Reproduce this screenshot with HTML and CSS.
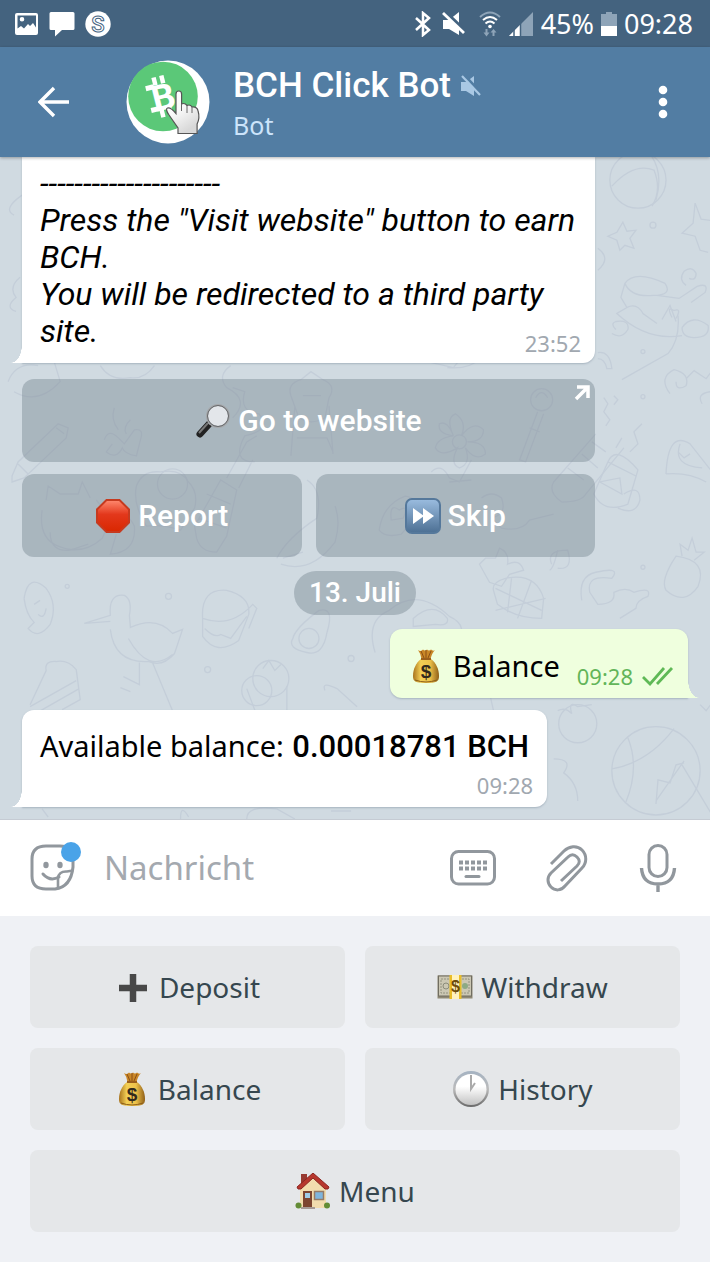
FILE: index.html
```html
<!DOCTYPE html>
<html lang="de">
<head>
<meta charset="utf-8">
<meta name="viewport" content="width=device-width, initial-scale=1">
<title>BCH Click Bot</title>
<link rel="stylesheet" href="styles.css">
</head>
<body>
<svg class="defs" width="0" height="0" aria-hidden="true">
  <defs>
    <linearGradient id="gold" x1="0" x2="1" y1="0" y2="0"><stop offset="0" stop-color="#a8731c"/><stop offset=".3" stop-color="#f3cf55"/><stop offset=".65" stop-color="#eec24a"/><stop offset="1" stop-color="#8f5f18"/></linearGradient>
    <symbol id="bag" viewBox="0 0 28 36">
      <path d="M6 2q3 2 5-.5 2 2 4 0 2 2 4 0 2 2 4 .5-3 3-4.500 9h-9Q9 6 6 2z" fill="#c98727"/>
      <path d="M9 3l3 7M14 2v8M19 3l-3 7" stroke="#8b4e16" stroke-width="1" fill="none"/>
      <path d="M9 11C4 15 1 21 1 28c0 6 3 7 13 7s13-1 13-7c0-7-3-13-8-17z" fill="url(#gold)"/>
      <path d="M3 32q11 4 22 0" stroke="#8b5c18" fill="none"/>
      <path d="M9 11h10" stroke="#9b5f1b" stroke-width="2"/>
      <text x="14" y="30" text-anchor="middle" class="bag-sign">$</text>
    </symbol>
  </defs>
</svg>

<div class="statusbar">
  <div class="status-group">
    <svg width="24" height="24" viewBox="0 0 24 24"><path fill="#fff" fill-rule="evenodd" d="M2 1h19q2 0 2 2v18q0 2-2 2H2q-2 0-2-2V3q0-2 2-2zm.5 2.500v13L6 14l3 2.500L13 12l2 2L18 11l3 4.500v-12zM7 5a2.300 2.300 0 1 1 0 4.600A2.300 2.300 0 0 1 7 5z"/></svg>
    <svg width="26" height="26" viewBox="0 0 26 26"><path fill="#fff" d="M2 1h22q1.500 0 1.500 1.500v15Q25.500 19 24 19H13l-7 6.500V19H2Q.5 19 .5 17.500v-15Q.5 1 2 1z"/></svg>
    <svg width="26" height="26" viewBox="0 0 26 26"><circle cx="13" cy="13" r="12.700" fill="#fff"/><text x="13" y="20.500" text-anchor="middle" class="badge-letter">S</text></svg>
  </div>
  <div class="status-group status-right">
    <svg width="16" height="26" viewBox="0 0 16 26"><path d="M1 7l13 12-6 5V2l6 5L1 19" fill="none" stroke="#fff" stroke-width="2.500"/></svg>
    <svg class="gap-mute" width="24" height="24" viewBox="0 0 24 24"><path fill="#fff" d="M1 8h6l10-8v23L7 17H1z"/><path d="M3 0l21 20" stroke="#44637f" stroke-width="4"/><path d="M1 1l21 20" stroke="#fff" stroke-width="2.800"/></svg>
    <svg class="gap-wifi" width="22" height="26" viewBox="0 0 22 26" fill="none" stroke-width="2"><path d="M1 6q10-9 20 0" stroke="#8ea4b8"/><path d="M4 9q7-6 14 0M6.500 12.500q4.500-4 9 0" stroke="#fff"/><circle cx="11" cy="15.500" r="1.800" fill="#fff"/><path d="M7.500 18v5M14.500 25v-5" stroke="#8ea4b8"/><path d="M4.500 21.500h6l-3 4zM11.500 21.500h6l-3-3.500z" fill="#8ea4b8"/></svg>
    <svg width="26" height="26" viewBox="0 0 26 26"><path d="M25 1v24H1z" fill="#8ea4b8"/><path d="M12 14v11H1z" fill="#fff"/><path d="M6 18v8M12.500 12v14" stroke="#44637f" stroke-width="1.500"/></svg>
    <span>45%</span>
    <svg width="16" height="24" viewBox="0 0 16 24"><path d="M5 0h6v2h5v12H0V2h5z" fill="#8ea4b8"/><path d="M0 14h16v10H0z" fill="#fff"/></svg>
    <span>09:28</span>
  </div>
</div>

<header class="header">
  <button class="icon-btn back" aria-label="Zurück"><svg width="32" height="32" viewBox="0 0 32 32"><path d="M31 16H3M16 2L2 16l14 14" fill="none" stroke="#fff" stroke-width="3.400"/></svg></button>
  <svg class="avatar" width="84" height="84" viewBox="0 0 84 84">
    <defs><linearGradient id="hand" x1="0" y1="0" x2=".5" y2="1"><stop offset="0" stop-color="#fff"/><stop offset=".5" stop-color="#fafafa"/><stop offset="1" stop-color="#d8d8d8"/></linearGradient></defs>
    <circle cx="42" cy="42" r="41.500" fill="#fff"/><circle cx="37" cy="36.500" r="34.800" fill="#5bc878"/>
    <g transform="rotate(-14 36 36)" fill="#fff"><text x="37" y="50" text-anchor="middle" class="coin-letter">B</text><path d="M30 16h4.500v8H30zM38 16h4.500v8H38zM30 49h4.500v8H30zM38 49h4.500v8H38zM22 22.500h8v5h-8zM22 45h8v5h-8z"/></g>
    <path d="M52 73.500V68L43 55q-4-6-1.500-7 3-1 8.500 5.500V34q0-3 2.800-3t2.800 3v10q3-1.500 5.500 1.500 3-1.500 5 1.500 5-.5 6 4 2 7-1 13v9.500z" fill="url(#hand)" stroke="#555" stroke-width="1.200"/>
    <path d="M55.500 44v7M61 45.500V53M66 47v6" stroke="#666" fill="none"/>
  </svg>
  <div class="peer">
    <h1 class="peer-name">BCH Click Bot <svg width="20" height="22" viewBox="0 0 20 22"><path d="M0 7h5l8-6v20l-8-5H0z" fill="#a9c8e4"/><path d="M3 0l18 19" stroke="#527da3" stroke-width="3"/><path d="M1 1l18 19" stroke="#a9c8e4" stroke-width="2.200"/></svg></h1>
    <p class="peer-state">Bot</p>
  </div>
  <button class="icon-btn more" aria-label="Mehr"><svg width="10" height="34" viewBox="0 0 10 34" fill="#fff"><circle cx="5" cy="5" r="4.300"/><circle cx="5" cy="17" r="4.300"/><circle cx="5" cy="29" r="4.300"/></svg></button>
</header>

<main class="chat">
  <svg class="wallpaper" viewBox="0 0 710 660" preserveAspectRatio="xMinYMin slice" aria-hidden="true">
    <g fill="none" stroke="#c4ced9" stroke-width="1.300">
      <circle cx="636" cy="23" r="28"/><path d="M610 29q22-24 42-16 8 20-2 36M648-3q14 18 6 46"/>
      <path d="M621 65l4 9 9-1-6 8 4 10-9-3-5 5-3-10-9-4 9-4zM693 46l6 16 14 2M693 46l-2 20-11 10 13 3 5 14 8 2"/>
      <circle cx="651" cy="68" r="3"/><circle cx="641" cy="194" r="2"/><path d="M596 91q14 10 0 22"/>
      <path d="M623 126q10-14 40 0 8 12-12 12-22 2-28-12zM623 126l-4 14 6 10-10 6q30 28 65 22M655 138l22 3 18-12q12-4 8 6l-14 10M625 150q10-5 16 6l14 10M660 162l8-14 6 16M670 160q-6-12 2-7 8-3 2 8M680 170q10-14 26-2 2 12-14 12-12 0-12-10M684 128q-8-6-2-14 8-6 12 2 0 8-7 5"/>
      <path d="M22 38q-20 14-8 20M20 120q-12 10-4 20-12 10 0 14M8 224q8-20 30-16M14 234q24 14 46-10l-6-20M100 208q10 16 30 12 14 2 24-12M230 208q-14 10-4 22 24 12 6 30M596 195q12-2 14 16h-5q-2-10-9-10"/>
      <path d="M12 318l6-14 40-38 10 4-2 10-42 40-12 4zM18 306l10 10M56 270l8 6M104 282q4-12 14-2l6 6 10-14q10-2 6 10l-4 16q-12-2-14-8-6 12-16 4 6-8 6-8M114 250q-4 12 4 22M130 262q-8 8-4 14"/>
      <path d="M136 328q6-16 24-14 20-4 28 10 10 10 6 26l-14 22q-18-6-34-4-14-22-10-40z"/><circle cx="172" cy="326" r="15"/><path d="M42 352q-4 28 16 36 24 10 44-8 10-20-6-38M46 342l2-14 12 8h18l4-12 8 16M50 374q0 20 20 18l18-6M100 352q24-4 34 16 2 26-24 28l6-20"/>
      <path d="M194 368l26-46 16 10-10 46-10 16q-16 0-20-14zM206 336l24 10M198 360l28 10M226 320l20-36 10-6M238 330l14-28M232 230l12 4q-6 20 14 22 14 16-14 22-14 26 10 26"/>
      <path d="M290 238q-4-12 10-16l10-8 12 8q14 6 6 18l-4 20q-14 8-26 0zM294 248l-4 50M328 248l4 48M296 280h30l6 14M302 238h18"/>
      <path d="M414 168l-6 32 44 10 20-24q10-10 4-36M418 170l14 16 24-12-38-4M446 210q44 4 42-44M428 195h40"/>
      <circle cx="540" cy="242" r="11"/><path d="M534 240q6-10 12 0M536 254l-18 48 6 2 18-48M528 270l10 4"/>
      <circle cx="458" cy="284" r="7"/><path d="M452 278q-8-18 2-22 12 8 6 22 12-16 22-6 0 12-16 12 18 0 18 12-10 8-20-6 6 16-6 20-10-4-2-20-16 10-22 0 2-10 18-12-16-2-14-12 8-4 14 12"/>
      <path d="M560 344q-14-10-8-20l42-48M560 344q20 0 24-8l38-46M566 310l16 12M580 296l16 14M590 284l14 10M430 314q10-10 18 6l10 4 12-22M448 324l22-2M480 340q10-8 20 0 6 16-10 20l10 10q20 4 28-8l24-6"/>
      <path d="M606 304q8-18 30 8l-10 34q-24 10-34-10zM606 304l28 14M598 324l22 12-2-16-20 4M622 336q16-10 16 6-4 16-22 8M614 290l6-10M628 294l8-8-4-12 8-8"/>
      <path d="M614 172q-6-6 0-8 14-2 12 8-6 10-16 4M620 222l46-26q12-14 10-38M668 236q-12-16 4-24 16 4 12 16-10 6-10-4M684 221l8-8 12 8 6-8M700 246q-6-10 8-12M602 240l4 6-4 8 6 8-4 6M612 238l4 4-4 5"/>
      <path d="M664 316q2-44 24-30l22 28M664 316q22-2 40 8M676 294l6 6 6-4M678 286q-8 22 22 24"/>
      <path d="M674 398q-16 24-10 34 18 16 32-4 10-26-22-30zM680 398l-2-12 8 6 4-12 4 14 8 0-10 8"/><circle cx="641" cy="239" r="2"/><circle cx="641" cy="409" r="2"/>
      <path d="M556 392q-4 18-8 20M556 410q16 2 10-18-22 0-16 14"/>
      <path d="M378 372q4-26 26-34 16 2 10 22l-14 16q-16 4-22-4zM390 362q-2-18 8-10 10-6 4 8z"/>
      <path d="M484 400l-6 6 10 18 12 4 8-12 14-4q-4-12-16-6 2-12-8-16l-4 10zM504 420q-14 4-12 12l4 14q18 14 44 14l2-20q-8-26-38-20zM494 430l46 22M510 420l-4 34M530 422l-14 38M544 440l-50 12"/>
      <path d="M580 442q-4-24 14-28 26-6 16 6-26-4-22 14l8 12q18 0 16-12 12-6 20 0 18-6 14 4-12 4-12 12l-16 10"/>
      <path d="M24 440q4-26 22-10 12 16 4 36-12 16-22 4l6-6q-8-8-10-24M34 446l6-4M38 456q6 6 8-6"/>
      <path d="M84 465l26-8q-2-22 14-20 8 4 5 20l1 12q26-12 42 6l10-4-8 24q-12 14-26 8-34 2-38-32M128 480q20 36 44 16M84 465l26-2M139 504v22l-16-8M152 504l20 48M120 529l10 4"/>
      <path d="M202 460q-2-30 24-28 24 6 22 24l-10 26q-22 16-36-4zM202 460q28 10 50-14l4 4-8 20M204 470q10 10 16 6l10 4 16-22"/><circle cx="207" cy="511" r="3"/><circle cx="350" cy="500" r="3"/><circle cx="168" cy="438" r="3"/><circle cx="67" cy="428" r="2"/>
      <path d="M292 480q2-10 26-28 16-4 8 22-4 24-20 20-20-4-14-14z"/><circle cx="308" cy="480" r="10"/>
      <path d="M30 546l16-34q-2-10 10-9 12-2 20 8l4 30-18 10M30 548l46-26M30 558l49-28"/>
      <circle cx="270" cy="520" r="18"/><circle cx="256" cy="532" r="15"/><path d="M262 510l6-8 6 10 6-6M286 528v34M246 530l12 32M324 532q-4-10 12-2l20 18"/>
      <path d="M374 494q-10-32 14-42 28-24 60 6 22 10 4 28M412 460q20-18 34 0 2 8-12 6l-22 2zM282 400l20-6M276 400q10-20 40-40 6-28-10-38M280 406q30 10 54-22 6-20 0-36"/>
      <circle cx="576" cy="565" r="19"/><path d="M556 552q8-4 14 3-4-14 6-7l14-2"/>
      <circle cx="654" cy="612" r="44"/><path d="M626 579q12 30-2 64M610 610q36-6 62-40M654 645l2-24 12 3 6-18 8-2M682 602l-28 40M680 606l30 50M698 546l6 6 6-8M552 600q20 0 10 14 14 10 14 28M442 532l16 4 16-8 14 6 4 18"/>
      <path d="M246 660q0-14 30-10l18 10M330 652h20M180 660q0-16 8-2M42 650l6 8"/>
    </g>
  </svg>

  <section class="thread">
    <article class="bubble in wide">
      <p class="notice">---------------------<br>Press the "Visit website" button to earn BCH.<br>You will be redirected to a third party site.</p>
      <time class="stamp">23:52</time>
    </article>
    <div class="inline-keys">
      <button class="inline-key full"><svg width="36" height="36" viewBox="0 0 36 36"><path d="M15 20L5 31" stroke="#222" stroke-width="7" stroke-linecap="round"/><path d="M13 20L4 30" stroke="#777" stroke-width="2"/><path d="M17 18l-3 3" stroke="#bbb" stroke-width="3"/><circle cx="23" cy="13" r="11" fill="#e3e6ea" stroke="#a5a7aa" stroke-width="2"/><circle cx="23" cy="13" r="10.500" fill="none" stroke="#55585b" stroke-width=".8"/></svg>Go to website
        <svg class="corner" width="16" height="16" viewBox="0 0 16 16"><path d="M3 2h11v11M14 2L2 14" fill="none" stroke="#fff" stroke-width="3.500"/></svg></button>
      <button class="inline-key"><svg width="36" height="36" viewBox="0 0 36 36"><defs><linearGradient id="red" x2="0" y2="1"><stop offset="0" stop-color="#ff8a70"/><stop offset=".45" stop-color="#e3381c"/><stop offset="1" stop-color="#d92700"/></linearGradient></defs><path d="M11.500 2h13L34 11.500v13L24.500 34h-13L2 24.500v-13z" fill="url(#red)" stroke="#c63a1f" stroke-width="2"/></svg>Report</button>
      <button class="inline-key"><svg width="36" height="36" viewBox="0 0 36 36"><defs><linearGradient id="blue" x2="0" y2="1"><stop offset="0" stop-color="#9bbde0"/><stop offset="1" stop-color="#4c6f93"/></linearGradient></defs><rect x="1" y="1" width="34" height="34" rx="6" fill="url(#blue)" stroke="#55789b" stroke-width="2"/><path d="M8 10l11 8-11 8zM18 10l11 8-11 8z" fill="#fff"/></svg>Skip</button>
    </div>
    <div class="date">13. Juli</div>
    <article class="bubble out">
      <svg class="bag-out" width="28" height="36"><use href="#bag"/></svg><span>Balance</span>
      <time class="stamp">09:28</time>
      <svg class="ticks" width="32" height="20" viewBox="0 0 32 20"><path d="M1 11l7 7L22 2M15 18L30 2" fill="none" stroke="#5fb956" stroke-width="2.800"/></svg>
    </article>
    <article class="bubble in balance">
      <p>Available balance: <b>0.00018781 BCH</b></p>
      <time class="stamp">09:28</time>
    </article>
  </section>
</main>

<form class="composer">
  <button type="button" class="icon-btn" aria-label="Sticker"><svg width="52" height="54" viewBox="0 0 52 54"><path d="M17 5h14q13 0 13 13v8Q42 46 26 48h-9Q3 48 3 35V18Q3 5 17 5z" fill="none" stroke="#91979d" stroke-width="3"/><path d="M29 47V37q1-7 9-6.500l6-1" fill="none" stroke="#91979d" stroke-width="2.600"/><path d="M14 33q7 8 16 3" fill="none" stroke="#91979d" stroke-width="3" stroke-linecap="round"/><ellipse cx="17" cy="24" rx="2.700" ry="3.200" fill="#91979d"/><ellipse cx="31" cy="24" rx="2.700" ry="3.200" fill="#91979d"/><circle cx="42" cy="11" r="10" fill="#4aa3e8"/></svg></button>
  <input class="message" type="text" placeholder="Nachricht" aria-label="Nachricht">
  <button type="button" class="icon-btn" aria-label="Tastatur"><svg width="48" height="50" viewBox="0 0 48 50"><rect x="2.500" y="8.500" width="43" height="32.500" rx="7" fill="none" stroke="#91979d" stroke-width="3"/><path d="M10 19.500h29M10 25.500h29" stroke="#91979d" stroke-width="4" stroke-dasharray="4 2"/><path d="M17 33.500h13" stroke="#91979d" stroke-width="3" stroke-linecap="round"/></svg></button>
  <button type="button" class="icon-btn" aria-label="Anhang"><svg width="44" height="50" viewBox="0 0 44 50"><path d="M5 21L18 8c5-5 13-6 18-1s5 13 0 18L19 43c-4 5-10 5-14 1s-4-10 0-14L22 14c3-3 6-3 9 0s3 6 0 9L15 38" fill="none" stroke="#91979d" stroke-width="3"/></svg></button>
  <button type="button" class="icon-btn" aria-label="Sprachnachricht"><svg width="38" height="50" viewBox="0 0 38 50"><rect x="10" y="2.500" width="18" height="31" rx="9" fill="none" stroke="#91979d" stroke-width="3"/><path d="M2.500 25q1 16 16.500 16t16.500-16M19 41v8" fill="none" stroke="#91979d" stroke-width="3.400"/></svg></button>
</form>

<nav class="keyboard" aria-label="Bot-Tastatur">
  <button class="key"><svg width="36" height="36" viewBox="0 0 36 36"><path d="M18 5v28M4 19h28" stroke="#484848" stroke-width="6.500"/></svg>Deposit</button>
  <button class="key"><svg width="36" height="36" viewBox="0 0 36 36"><rect x=".5" y="6.500" width="35" height="23" fill="#8f8975"/><rect x="1.500" y="7" width="33" height="20" fill="#cbc7b3" stroke="#706d60"/><rect x="4" y="10" width="28" height="14" fill="none" stroke="#949380" stroke-dasharray="2 1"/><circle cx="9" cy="17" r="3" fill="none" stroke="#8b8c7a"/><circle cx="28" cy="17" r="3" fill="#8daa84"/><path d="M12.500 6h12v24h-12z" fill="#e9bd28"/><path d="M15 6h7v24h-7z" fill="#fff2be"/><text x="18.500" y="23" text-anchor="middle" class="note-sign">$</text></svg>Withdraw</button>
  <button class="key"><svg width="36" height="36" viewBox="-4 0 36 36"><use href="#bag" width="28" height="36"/></svg>Balance</button>
  <button class="key"><svg width="38" height="38" viewBox="0 0 38 38"><defs><linearGradient id="rim" x2="0" y2="1"><stop offset="0" stop-color="#a5b3c2"/><stop offset=".5" stop-color="#bbb"/><stop offset="1" stop-color="#696969"/></linearGradient><linearGradient id="face" x2="0" y2="1"><stop offset=".4" stop-color="#fff"/><stop offset="1" stop-color="#c2c2c2"/></linearGradient></defs><circle cx="19" cy="19" r="18" fill="url(#rim)"/><circle cx="19" cy="19.500" r="15.500" fill="url(#face)"/><path d="M19 5v14l4-6" stroke="#aaa" stroke-width="2" fill="none"/></svg>History</button>
  <button class="key full"><svg width="36" height="36" viewBox="0 0 36 36"><path d="M6 1h6v12H6z" fill="#973a32"/><path d="M5 14L18 4l13 11v20H5z" fill="#f2dcae"/><path d="M18 0L2 14l1 2h3L18 5l12 11h3l1-2z" fill="#b7372e" stroke="#8c2520"/><rect x="8" y="18" width="9" height="16" fill="#7c4530"/><rect x="10" y="20" width="5" height="5" fill="#9fcce8"/><rect x="19.500" y="18.500" width="9" height="8" fill="#7fb5dd" stroke="#967b66" stroke-width="1.500"/><path d="M6 34h14v2H6z" fill="#a69b96"/><circle cx="3.500" cy="32.500" r="3" fill="#638c36"/><circle cx="32" cy="32.500" r="3" fill="#638c36"/></svg>Menu</button>
</nav>
</body>
</html>
```

FILE: styles.css
```css
* { box-sizing: border-box; }

:root {
  --hand: "Choco cooky", "Noto Sans", sans-serif;
  --ui: Roboto, sans-serif;
}

body {
  margin: 0;
  min-height: 100vh;
  display: flex;
  flex-direction: column;
  font-family: var(--hand);
  background: #eff1f5;
}

p, h1 { margin: 0; font-weight: 400; }
svg { display: block; flex: none; }
button { border: 0; padding: 0; font: inherit; color: inherit; cursor: pointer; }
.defs { position: absolute; }

.statusbar {
  height: 47px;
  padding: 0 17px 0 15px;
  display: flex;
  align-items: center;
  justify-content: space-between;
  background: #44637f;
  color: #fff;
  font-size: 27px;
}
.status-group { display: flex; align-items: center; gap: 10px; }
.status-right { gap: 7px; }
.gap-mute { margin-left: 4px; }
.gap-wifi { margin-left: 6px; }
.badge-letter { font: 500 22px var(--ui); fill: #fff; stroke: #44637f; stroke-width: 1px; }

.header {
  height: 110px;
  padding: 0 42px 0 38px;
  display: flex;
  align-items: center;
  background: #527da3;
  color: #fff;
  position: relative;
  z-index: 1;
  box-shadow: 0 1px 3px rgba(0, 0, 0, .3);
}
.icon-btn { background: none; display: flex; flex: none; }
.avatar { margin-left: 56px; }
.peer { flex: 1; margin-left: 23px; padding-top: 3px; }
.peer-name {
  display: flex;
  align-items: center;
  gap: 10px;
  font: 500 35px/42px var(--ui);
}
.peer-state { font-size: 25px; line-height: 36px; color: #cce4fb; }
.coin-letter { font: 700 36px var(--ui); }

.chat {
  flex: 1;
  position: relative;
  overflow: hidden;
  display: flex;
  flex-direction: column;
  justify-content: flex-end;
  background: #d0dae1;
  border-bottom: 1px solid #c5cbd3;
}
.wallpaper { position: absolute; inset: 0; width: 100%; height: 100%; }
.thread {
  position: relative;
  display: flex;
  flex-direction: column;
  align-items: flex-start;
  padding: 0 22px 12px;
}

.bubble {
  position: relative;
  border-radius: 12px;
  font-size: 29px;
  line-height: 37px;
  color: #000;
  box-shadow: 0 1px 2px rgba(90, 110, 130, .35);
}
.bubble::after { content: ""; position: absolute; bottom: 0; width: 11px; height: 18px; }
.in { background: #fff; border-bottom-left-radius: 0; }
.in::after { right: 100%; background: radial-gradient(ellipse 11px 18px at 0 0, transparent 97%, #fff 100%); }
.out { background: #efffde; border-bottom-right-radius: 0; }
.out::after { left: 100%; background: radial-gradient(ellipse 11px 18px at 100% 0, transparent 97%, #efffde 100%); }

.wide { align-self: stretch; margin-right: 93px; padding: 8px 18px 13px; border-top-left-radius: 0; border-top-right-radius: 0; }
.notice { font: italic 32px/37px var(--ui); }
.stamp { font-size: 22px; line-height: 26px; color: #a1a8b0; }
.in .stamp { position: absolute; right: 14px; bottom: 7px; }

.inline-keys {
  align-self: stretch;
  margin: 16px 93px 0 0;
  display: grid;
  grid-template-columns: 1fr 1fr;
  gap: 12px 14px;
}
.inline-key {
  position: relative;
  height: 83px;
  display: flex;
  align-items: center;
  justify-content: center;
  gap: 7px;
  border-radius: 12px;
  background: rgba(128, 143, 153, .48);
  color: #fff;
  font: 500 30px/36px var(--ui);
}
.full { grid-column: 1 / -1; }
.corner { position: absolute; top: 6px; right: 5px; }

.date {
  align-self: center;
  margin-top: 14px;
  padding: 0 15px;
  border-radius: 22px;
  background: rgba(128, 143, 153, .48);
  color: #fff;
  font: 500 28px/44px var(--ui);
}

.out {
  align-self: flex-end;
  height: 69px;
  margin-top: 14px;
  padding: 4px 14px 0 22px;
  display: flex;
  align-items: center;
}
.out .bag-out { margin-right: 13px; }
.out .stamp { margin: 20px 9px 0 17px; color: #62b559; }
.out .ticks { margin-top: 20px; }

.balance { margin-top: 12px; padding: 17px 18px 42px; }
.balance b { font: 500 31px/37px var(--ui); margin-left: 1px; }
.balance .stamp { bottom: 9px; }

.composer {
  height: 96px;
  padding: 0 33px 0 29px;
  display: flex;
  align-items: center;
  background: #fff;
}
.message {
  flex: 1;
  min-width: 0;
  margin: 0 20px 0 23px;
  padding: 0;
  border: 0;
  outline: 0;
  background: none;
  font: 33px/48px var(--hand);
  color: #000;
}
.message::placeholder { color: #a4a9af; opacity: 1; }
.composer .icon-btn + .icon-btn { margin-left: 49px; }

.keyboard {
  padding: 30px;
  display: grid;
  grid-template-columns: 1fr 1fr;
  gap: 20px;
}
.key {
  height: 82px;
  display: flex;
  align-items: center;
  justify-content: center;
  gap: 8px;
  border-radius: 8px;
  background: #e5e7e9;
  color: #36474f;
  font-size: 28px;
}
.bag-sign { font: 700 19px "Liberation Sans", sans-serif; fill: #332a1d; }
.note-sign { font: 700 16px "Liberation Sans", sans-serif; fill: #6c4d0c; }
```
